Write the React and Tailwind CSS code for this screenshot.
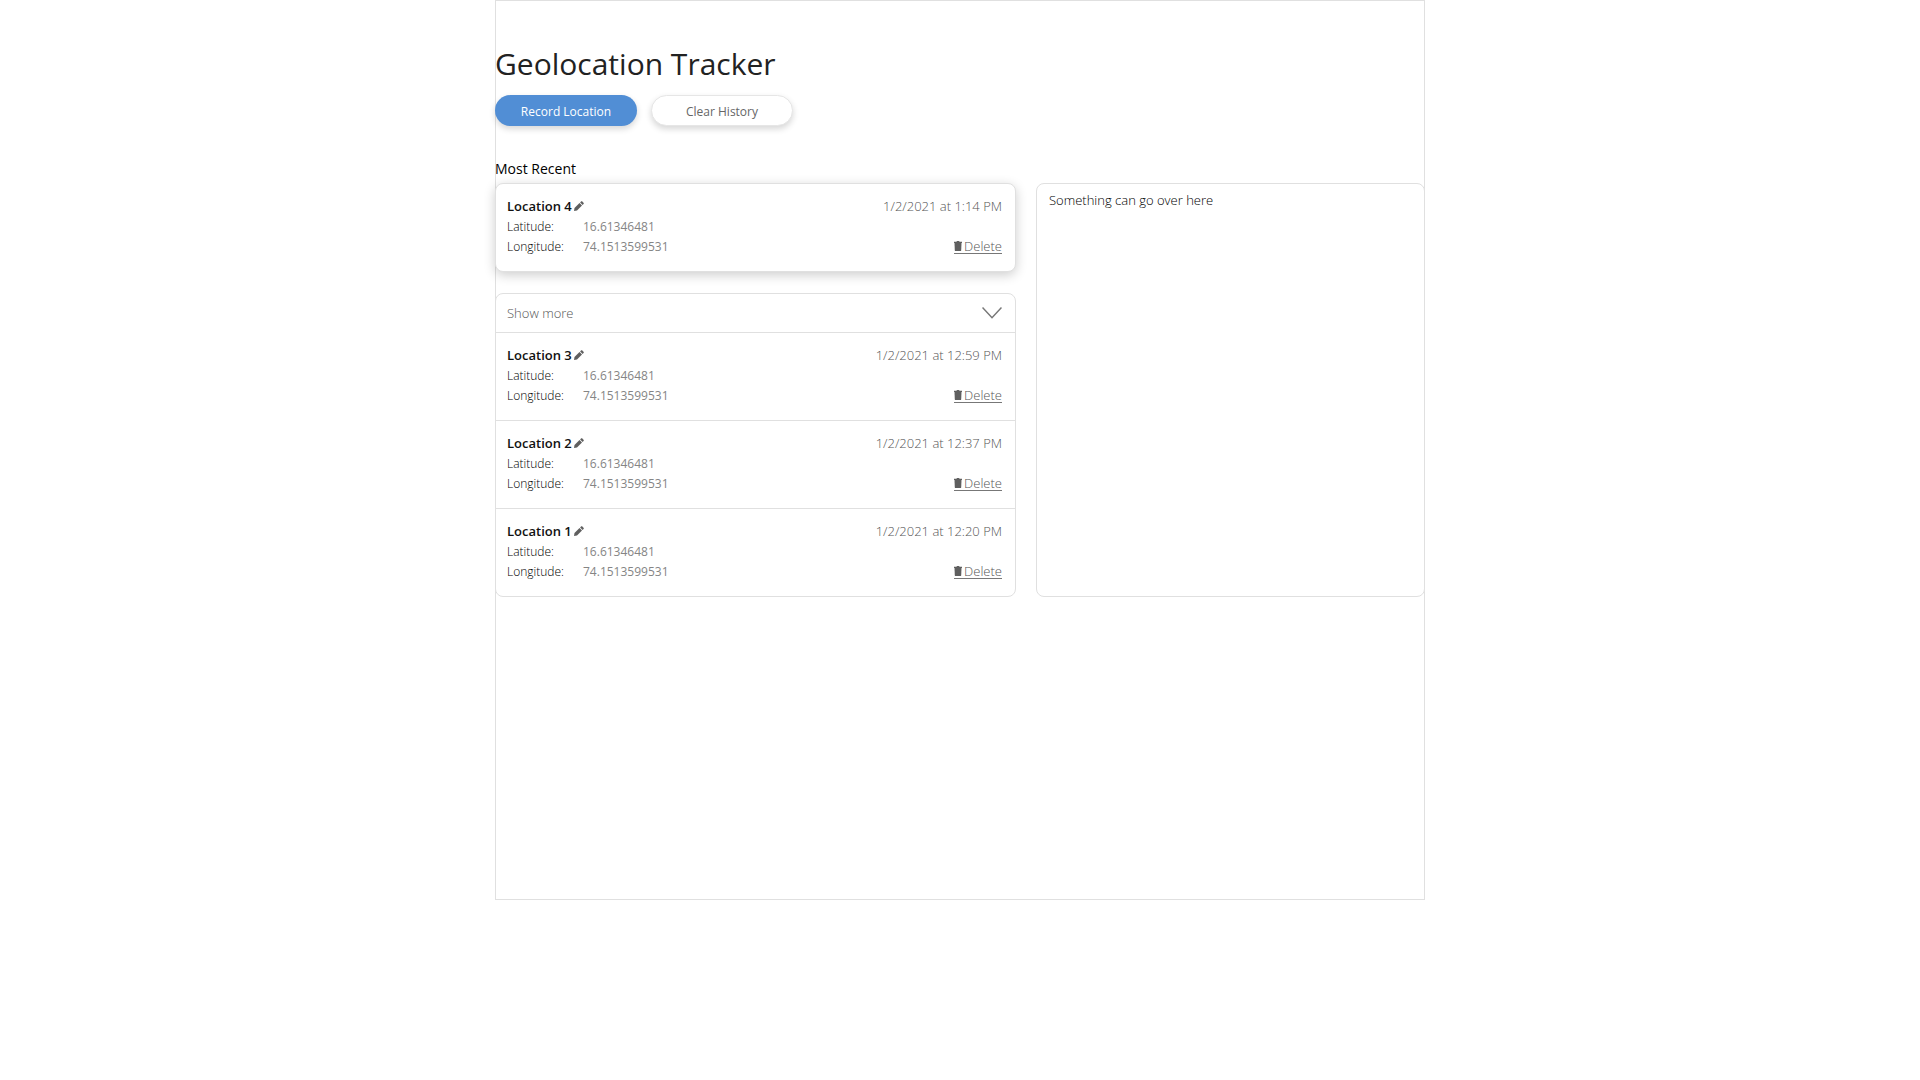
const history = [
  { id: 3, date: "1/2/2021 at 12:59 PM" },
  { id: 2, date: "1/2/2021 at 12:37 PM" },
  { id: 1, date: "1/2/2021 at 12:20 PM" },
];

function PencilIcon() {
  return (
    <svg width="10" height="10" viewBox="0 0 10 10" fill="#5f5f5f" aria-hidden="true">
      <path d="M0 10 L0.5 7 L5.5 2 L8 4.5 L3 9.5 Z" />
      <path d="M6.1 1.4 L7.2 0.3 Q7.7 0 8.1 0.3 L9.7 1.9 Q10 2.3 9.7 2.8 L8.6 3.9 Z" />
    </svg>
  );
}

function TrashIcon() {
  return (
    <svg width="8" height="10" viewBox="0 0 8 10" fill="#5f5f5f" aria-hidden="true">
      <path d="M0 0.8 H2.4 L3 0 H5 L5.6 0.8 H8 V2 H0 Z" />
      <path d="M0.5 2 H7.5 L7.2 9.4 Q7.1 10 6.4 10 H1.6 Q0.9 10 0.8 9.4 Z" />
    </svg>
  );
}

function LocationEntry({ id, date }) {
  return (
    <div className="flex justify-between pt-3 pr-[13px] pb-[14px] pl-[11px] text-[13px] leading-5 text-[#555555]">
      <div>
        <div className="flex items-center gap-[2px]">
          <h3 className="font-semibold text-[#111111]">Location {id}</h3>
          <button type="button" aria-label={`Rename location ${id}`}>
            <PencilIcon />
          </button>
        </div>
        <dl className="grid grid-cols-[76px_auto] pt-px text-xs leading-5">
          <dt className="text-black">Latitude:</dt>
          <dd className="font-normal text-[#858585]">16.61346481</dd>
          <dt className="text-black">Longitude:</dt>
          <dd className="font-normal text-[#858585]">74.1513599531</dd>
        </dl>
      </div>
      <div className="flex flex-col items-end gap-[22px]">
        <time>{date}</time>
        <button type="button" className="flex h-4 items-center gap-[2px] border-b border-[#777777]">
          <TrashIcon />
          Delete
        </button>
      </div>
    </div>
  );
}

export default function App() {
  return (
    <div className="min-h-screen bg-white font-['Open_Sans',sans-serif] font-light text-black">
      <main className="mx-auto min-h-[900px] max-w-[930px] pt-11 ring-1 ring-[#e0e0e0] ring-inset">
        <h1 className="text-3xl leading-10 font-normal text-[#222222]">Geolocation Tracker</h1>
        <div className="mt-[11px] flex gap-[14px] text-xs font-normal">
          <button
            type="button"
            className="h-[31px] w-[142px] rounded-full bg-[#518ed5] pt-[2px] text-white shadow-[0_3px_6px_rgba(0,0,0,0.16)]"
          >
            Record Location
          </button>
          <button
            type="button"
            className="h-[31px] w-[142px] rounded-full border border-[#e6e6e6] bg-white pt-[2px] text-[#666666] shadow-[0_3px_6px_rgba(0,0,0,0.16)]"
          >
            Clear History
          </button>
        </div>
        <h2 className="mt-[31px] text-sm leading-6 font-normal">Most Recent</h2>
        <div className="mt-[2px] grid grid-cols-[521fr_389fr] gap-5">
          <div>
            <section className="rounded-lg border border-[#e0e0e0] bg-white shadow-[0_3px_12px_rgba(0,0,0,0.2)]">
              <LocationEntry id={4} date="1/2/2021 at 1:14 PM" />
            </section>
            <section className="mt-[21px] rounded-lg border border-[#e0e0e0] bg-white">
              <button
                type="button"
                className="flex h-[38px] w-full items-center justify-between pr-[13px] pl-[11px] text-[13px] text-[#555555]"
              >
                <span className="pt-[2px]">Show more</span>
                <svg width="20" height="12" viewBox="0 0 20 12" fill="none" stroke="#777777" strokeWidth="1.5" aria-hidden="true">
                  <path d="M0.5 0.5 L10 10.7 L19.5 0.5" />
                </svg>
              </button>
              {history.map((entry) => (
                <div key={entry.id} className="border-t border-[#e0e0e0]">
                  <LocationEntry id={entry.id} date={entry.date} />
                </div>
              ))}
            </section>
          </div>
          <aside className="rounded-lg border border-[#e0e0e0] bg-white px-3 py-[6px] text-[13px] leading-5">
            Something can go over here
          </aside>
        </div>
      </main>
    </div>
  );
}
